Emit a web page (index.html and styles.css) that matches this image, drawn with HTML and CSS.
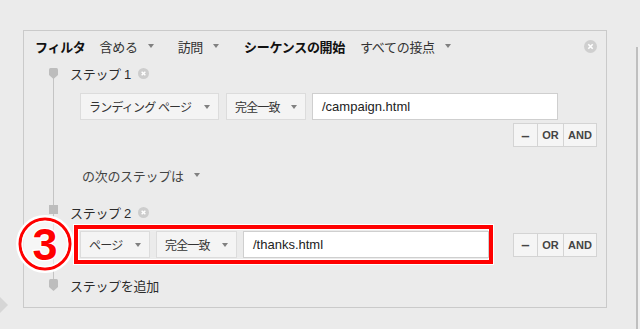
FILE: index.html
```html
<!DOCTYPE html>
<html lang="ja">
<head>
    <meta charset="UTF-8">
    <meta name="viewport" content="width=device-width, initial-scale=1.0">
    <title>シーケンス フィルタ</title>
    <link rel="stylesheet" href="styles.css">
</head>
<body>
    <div class="edge-left"></div>

    <div class="panel">
        <!-- フィルタ条件 -->
        <div class="filter-bar">
            <span class="label-strong">フィルタ</span>
            <span class="dd dd-include">含める<i class="caret"></i></span>
            <span class="dd dd-visit">訪問<i class="caret"></i></span>
            <span class="label-strong seq-start">シーケンスの開始</span>
            <span class="dd dd-touch">すべての接点<i class="caret"></i></span>
            <svg class="close-btn" width="13" height="13" viewBox="0 0 13 13">
                <circle cx="6.5" cy="6.5" r="6.5" fill="#cfcfcf"/>
                <path d="M4.3 4.3l4.4 4.4M8.7 4.3l-4.4 4.4" stroke="#fff" stroke-width="1.6"/>
            </svg>
        </div>

        <div class="steps">
            <!-- ステップ 1 -->
            <div class="step-head">
                <svg class="marker" width="9" height="11" viewBox="0 0 9 11">
                    <path d="M0 1.5Q0 0 1.5 0H7.5Q9 0 9 1.5V7L4.5 11L0 7Z" fill="#bdbdbd"/>
                </svg>
                <span class="step-title">ステップ 1</span>
                <svg class="close-btn small" width="11" height="11" viewBox="0 0 13 13">
                    <circle cx="6.5" cy="6.5" r="6.5" fill="#cdcdcd"/>
                    <path d="M4.3 4.3l4.4 4.4M8.7 4.3l-4.4 4.4" stroke="#fff" stroke-width="1.7"/>
                </svg>
            </div>
            <div class="cond-row">
                <div class="select w-landing">ランディング ページ<i class="caret"></i></div>
                <div class="select w-match">完全一致<i class="caret"></i></div>
                <div class="text-input">/campaign.html</div>
            </div>
            <div class="logic-row">
                <div class="logic">
                    <span class="logic-btn w-minus">–</span>
                    <span class="logic-btn w-or">OR</span>
                    <span class="logic-btn w-and">AND</span>
                </div>
            </div>

            <div class="next-step">の次のステップは<i class="caret"></i></div>

            <!-- ステップ 2 -->
            <div class="step-head step-second">
                <svg class="marker marker-square" width="9" height="9" viewBox="0 0 9 9">
                    <rect width="9" height="9" fill="#bdbdbd"/>
                </svg>
                <span class="step-title">ステップ 2</span>
                <svg class="close-btn small" width="11" height="11" viewBox="0 0 13 13">
                    <circle cx="6.5" cy="6.5" r="6.5" fill="#cdcdcd"/>
                    <path d="M4.3 4.3l4.4 4.4M8.7 4.3l-4.4 4.4" stroke="#fff" stroke-width="1.7"/>
                </svg>
            </div>
            <div class="marked-row">
                <svg class="num-badge" width="60" height="60" viewBox="0 0 60 60">
                    <circle cx="30" cy="30" r="27.5" fill="rgba(255,255,255,0.55)" stroke="#fff" stroke-width="3"/>
                    <circle cx="30" cy="30" r="25" fill="none" stroke="#f00" stroke-width="3"/>
                    <circle cx="30" cy="30" r="22.6" fill="none" stroke="#fff" stroke-width="1.4"/>
                    <text x="30" y="46" text-anchor="middle" class="num-text">3</text>
                </svg>
                <div class="highlight">
                    <div class="select w-page">ページ<i class="caret"></i></div>
                    <div class="select w-match2">完全一致<i class="caret"></i></div>
                    <div class="text-input">/thanks.html</div>
                </div>
                <div class="logic">
                    <span class="logic-btn w-minus">–</span>
                    <span class="logic-btn w-or">OR</span>
                    <span class="logic-btn w-and">AND</span>
                </div>
            </div>

            <div class="step-head step-add">
                <svg class="marker" width="9" height="12" viewBox="0 0 9 12">
                    <path d="M0 1.5Q0 0 1.5 0H7.5Q9 0 9 1.5V8L4.5 12L0 8Z" fill="#bdbdbd"/>
                </svg>
                <span class="step-title">ステップを追加</span>
            </div>
        </div>
    </div>

    <div class="edge-right"></div>
</body>
</html>
```

FILE: styles.css
```css
* {
    margin: 0;
    padding: 0;
    box-sizing: border-box;
}

body {
    font-family: 'Liberation Sans', 'Noto Sans CJK JP', sans-serif;
    background-color: #ebebeb;
    color: #333;
    display: flex;
    align-items: flex-start;
    height: 329px;
    overflow: hidden;
}

.edge-left {
    width: 8px;
    margin-top: 297px;
    border-top: 8px solid transparent;
    border-bottom: 8px solid transparent;
    border-left: 8px solid #d6d6d6;
}

.edge-right {
    flex: 1;
    margin-left: 29px;
    margin-top: 47px;
    height: 282px;
    border-left: 2px solid #bfbfbf;
    background: #f0f0f0;
}

.panel {
    width: 584px;
    height: 278px;
    margin-top: 30px;
    margin-left: 15px;
    border: 1px solid #cacaca;
    padding-right: 9px;
    flex-shrink: 0;
}

/* 上部のフィルタ行 */
.filter-bar {
    display: flex;
    align-items: center;
    height: 30px;
    padding-left: 11px;
    font-size: 13px;
    letter-spacing: -0.3px;
    color: #333;
}

.label-strong {
    font-weight: bold;
    color: #111;
}

.dd {
    display: flex;
    align-items: center;
}

.dd-include { margin-left: 14px; }
.dd-visit { margin-left: 24px; }
.seq-start { margin-left: 25px; }
.dd-touch { margin-left: 15px; }

.caret {
    display: inline-block;
    width: 0;
    height: 0;
    margin-left: 10px;
    border-left: 3.5px solid transparent;
    border-right: 3.5px solid transparent;
    border-top: 4px solid #808080;
}

.close-btn {
    margin-left: auto;
    display: block;
}

.close-btn.small {
    margin-left: 7px;
}

/* ステップ一覧 */
.steps {
    position: relative;
}

.steps::before {
    content: '';
    position: absolute;
    left: 29px;
    top: 14px;
    bottom: 16px;
    width: 1px;
    background: #c4c4c4;
}

.step-head {
    display: flex;
    align-items: center;
    height: 24px;
    font-size: 13px;
    letter-spacing: -0.3px;
    position: relative;
}

.marker {
    display: block;
    margin-left: 25px;
}

.marker-square {
    margin-bottom: 6px;
}

.step-title {
    margin-left: 12px;
    color: #2b2b2b;
}

.step-second {
    margin-top: 15px;
}

.step-add {
    margin-top: 11px;
    height: 20px;
}

.cond-row {
    display: flex;
    margin-top: 8px;
    margin-left: 56px;
}

.select {
    display: flex;
    align-items: center;
    justify-content: space-between;
    height: 27px;
    padding: 0 8px;
    background: #f4f4f4;
    border: 1px solid #dcdcdc;
    font-size: 12px;
    letter-spacing: -0.8px;
    color: #333;
    margin-right: 6px;
}

.select .caret {
    margin-left: 0;
}

.w-landing { width: 139px; margin-right: 7px; }
.w-match { width: 80px; }
.w-page { width: 70px; }
.w-match2 { width: 81px; }

.text-input {
    width: 246px;
    height: 27px;
    background: #fff;
    border: 1px solid #cfcfcf;
    padding-left: 9px;
    display: flex;
    align-items: center;
    font-size: 13px;
    color: #222;
}

.logic-row {
    display: flex;
    justify-content: flex-end;
    margin-top: 3px;
}

.logic {
    display: flex;
}

.logic-btn {
    height: 24px;
    display: flex;
    align-items: center;
    justify-content: center;
    background: #f5f5f5;
    border: 1px solid #d4d4d4;
    font-size: 11px;
    font-weight: bold;
    color: #444;
}

.logic-btn + .logic-btn {
    margin-left: -1px;
}

.w-minus { width: 25px; font-size: 15px; }
.w-or { width: 27px; }
.w-and { width: 34px; }

.next-step {
    display: flex;
    align-items: center;
    height: 20px;
    margin-top: 18px;
    margin-left: 58px;
    font-size: 13px;
    letter-spacing: -0.3px;
    color: #444;
}

/* 赤枠の行 */
.marked-row {
    display: flex;
    align-items: center;
    justify-content: space-between;
    margin-top: 1px;
    position: relative;
}

.highlight {
    display: flex;
    margin-left: 50px;
    padding: 2px 0 2px 2px;
    border: 4px solid #f00;
    box-shadow: 0 0 0 1px #fff, inset 0 0 0 1px #fff;
}

.num-badge {
    position: absolute;
    left: -9px;
    top: -11px;
    z-index: 2;
}

.num-text {
    font-family: 'Liberation Sans', sans-serif;
    font-size: 45px;
    font-weight: bold;
    fill: #f00;
    stroke: #fff;
    stroke-width: 2.5px;
    paint-order: stroke;
}
```
